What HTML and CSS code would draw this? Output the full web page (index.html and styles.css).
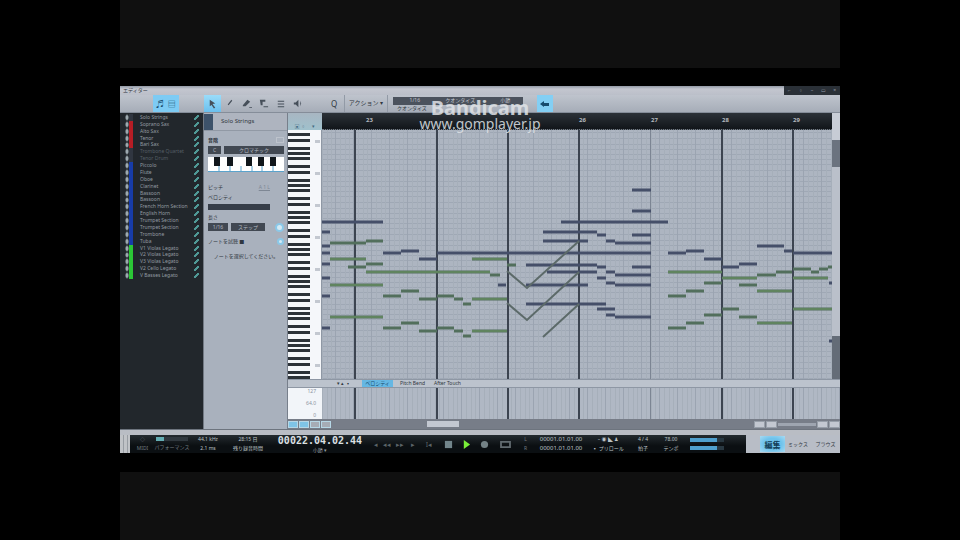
FILE: index.html
```
<!DOCTYPE html>
<html lang="ja">
<head>
<meta charset="utf-8">
<title>Piano roll</title>
<link rel="stylesheet" href="styles.css">
</head>
<body>
<div class="frame">
<main class="app">
  <header class="titlebar"><span class="title">エディター</span><span class="window"><button aria-label="ピン">⌐</button><button aria-label="縮小">▫</button><button aria-label="最小化">–</button><button aria-label="最大化">▭</button><button aria-label="閉じる">×</button></span></header>
  <div class="toolbar">
    <div class="views"><button aria-label="譜面">♬</button><button aria-label="リスト">▤</button></div>
    <div class="tools">
      <button class="on" aria-label="矢印"><svg viewBox="0 0 12 12"><path d="M3 2l6 4-3 .5 3 4-1.500 1L5 7.500 3 9z"/></svg></button>
      <button aria-label="ペイント"><svg viewBox="0 0 12 12"><path d="M4 7l4-5 1 1-4 5z"/></svg></button>
      <button aria-label="消しゴム"><svg viewBox="0 0 12 12"><path d="M2 8l5-6 3 2-5 5H2zM9 10h3v1H9z"/></svg></button>
      <button aria-label="分割"><svg viewBox="0 0 12 12"><path d="M2 2h6v2H5v4H3zM6 9h5v1H6z"/></svg></button>
      <button aria-label="ミュート"><svg viewBox="0 0 12 12"><path d="M3 3h7v1H3zM3 6h7v1H3zM3 9h7v1H3z"/></svg></button>
      <button aria-label="試聴"><svg viewBox="0 0 12 12"><path d="M2 5h2l3-3v8L4 7H2zM9 3l1 3-1 3z"/></svg></button>
    </div>
    <button class="q" aria-label="クオンタイズ">Q</button>
    <button class="action">アクション ▾</button>
    <div class="snap"><div class="snapline"><span>1/16</span><span>クオンタイズ</span><span>小節</span></div><div class="snaplabels"><span>クオンタイズ</span></div></div>
    <button class="follow" aria-label="自動スクロール"><svg viewBox="0 0 10 8"><path fill="#174c6d" d="M0 4l4-3v2h5v3H4v1z"/></svg></button>
  </div>
  <div class="work">
    <aside class="tracks"><ul>
      <li><i></i><span>Solo Strings</span><b></b></li>
      <li class="red"><i></i><span>Soprano Sax</span><b></b></li>
      <li class="red"><i></i><span>Alto Sax</span><b></b></li>
      <li class="red"><i></i><span>Tenor</span><b></b></li>
      <li class="red"><i></i><span>Bari Sax</span><b></b></li>
      <li class="dim"><i></i><span>Trombone Quartet</span><b></b></li>
      <li class="dim"><i></i><span>Tenor Drum</span><b></b></li>
      <li class="blue"><i></i><span>Piccolo</span><b></b></li>
      <li class="blue"><i></i><span>Flute</span><b></b></li>
      <li class="blue"><i></i><span>Oboe</span><b></b></li>
      <li class="blue"><i></i><span>Clarinet</span><b></b></li>
      <li class="blue"><i></i><span>Bassoon</span><b></b></li>
      <li class="blue"><i></i><span>Bassoon</span><b></b></li>
      <li class="blue"><i></i><span>French Horn Section</span><b></b></li>
      <li class="blue"><i></i><span>English Horn</span><b></b></li>
      <li class="blue"><i></i><span>Trumpet Section</span><b></b></li>
      <li class="blue"><i></i><span>Trumpet Section</span><b></b></li>
      <li class="blue"><i></i><span>Trombone</span><b></b></li>
      <li class="blue"><i></i><span>Tuba</span><b></b></li>
      <li class="green"><i></i><span>V1 Violas Legato</span><b></b></li>
      <li class="green"><i></i><span>V2 Violas Legato</span><b></b></li>
      <li class="green"><i></i><span>V3 Violas Legato</span><b></b></li>
      <li class="green"><i></i><span>V2 Cello Legato</span><b></b></li>
      <li class="green"><i></i><span>V Basses Legato</span><b></b></li>
    </ul></aside>
    <aside class="inspector">
      <div class="part"><i></i><span>Solo Strings</span></div>
      <div class="props">
        <div class="row"><strong>音階</strong><i class="box"></i></div>
        <div class="row fields"><button class="dark key">C</button><button class="dark wide">クロマチック</button></div>
        <svg class="octave" viewBox="0 0 76 15" preserveAspectRatio="none"><path fill="#fff" d="M0 0h76v15H0z"/><path stroke="#5ba3cc" d="M0 14.500h76M11 9v6M22 9v6M33 9v6M44 9v6M54 9v6M65 9v6"/><path fill="#10161b" d="M6 0h6v9H6zM19 0h6v9h-6zM38 0h6v9h-6zM50 0h6v9h-6zM62 0h6v9h-6z"/></svg>
        <div class="row gap"><span>ピッチ</span><u>A 1 L</u></div>
        <label class="row" for="vel">ベロシティ</label>
        <input id="vel" type="range" value="100">
        <div class="row"><span>長さ</span></div>
        <div class="row fields"><button class="dark len">1/16</button><button class="dark mode">ステップ</button><i class="glow"></i></div>
        <div class="row notes"><span>ノートを試聴 ■</span><i class="glow small"></i></div>
        <p>ノートを選択してください。</p>
      </div>
    </aside>
    <section class="editor">
      <div class="corner"><span>▣ ▫</span><span>▾</span></div>
      <div class="ruler"><span>23</span><span></span><span></span><span>26</span><span>27</span><span>28</span><span>29</span></div>
      <div class="vscroll"></div>
      <svg class="keys" viewBox="0 0 34 249" preserveAspectRatio="none">
        <defs><pattern id="octaveKeys" width="34" height="32" patternUnits="userSpaceOnUse">
          <path fill="#f5f7fa" d="M0 0h34v32H0z"/><path fill="#2c3238" d="M0 3h22v3H0zM0 9h22v3H0zM0 17h22v3H0zM0 22h22v3H0zM0 27h22v3H0z"/><path fill="#c3c8d0" d="M27 10h5v3h-5z"/></pattern></defs>
        <path fill="url(#octaveKeys)" d="M0 0h34v249H0z"/><path fill="#8f98a5" d="M33 0h1v249h-1z"/>
      </svg>
      <svg class="roll" viewBox="0 0 510 249" preserveAspectRatio="none">
        <defs>
          <pattern id="rows" width="510" height="32" patternUnits="userSpaceOnUse"><path fill="#9fa8b5" d="M0 2h510v1H0zM0 8h510v1H0zM0 14h510v1H0zM0 19h510v1H0zM0 24h510v1H0zM0 29h510v1H0z"/></pattern>
          <pattern id="beats" x="5" width="18" height="249" patternUnits="userSpaceOnUse"><path fill="#9ba4b1" d="M8 0h1v249H8z"/><path fill="#a6afba" d="M0 0h1v249H0zM4 0h1v249H4zM13 0h1v249h-1z"/></pattern>
        </defs>
        <path fill="#adb5c1" d="M0 0h510v249H0z"/><path fill="url(#rows)" d="M0 0h510v249H0z"/><path fill="url(#beats)" d="M0 0h510v249H0z"/>
        <path stroke="#3c4450" stroke-width="2" d="M33 0v249M115 0v249M186 0v249M257 0v249M400 0v249M471 0v249"/>
        <path stroke="#7c8593" d="M328.500 0v249"/>
        <path class="stave" stroke="#526f5c" d="M8 113h36M44 111h17M8 129h36M26 137h18M44 134h17M44 142h124M168 145h10M8 155h53M8 187h53M150 129h35M61 166h18M79 161h18M97 169h18M115 166h17M132 169h9M141 174h8M150 169h35M61 198h18M79 193h18M97 201h18M115 198h17M132 201h9M141 206h8M150 201h35M185 135h9M346 142h54M400 148h35M435 145h19M454 142h16M471 139h18M489 142h8M497 139h9M471 148h35M506 137h4M346 166h18M364 161h18M382 153h18M417 155h18M435 161h35M346 198h18M364 193h18M382 185h18M400 179h17M417 187h18M435 193h35M471 179h39"/>
        <path class="stave core" stroke="#6f9a62" d="M8 129h36M44 142h124M8 155h53M8 187h53M150 129h35M150 169h35M150 201h35M346 142h54M400 148h35M435 161h35M435 193h35M471 148h35M471 179h39"/>
        <path class="stave" stroke="#454f69" d="M0 92h61M0 102h8M0 116h8M0 123h8M0 134h8M0 148h8M0 166h8M0 198h8M61 123h18M79 121h18M97 129h18M115 123h214M310 60h19M310 81h19M239 92h107M221 102h54M275 105h9M310 105h19M221 111h45M284 111h9M293 113h36M204 135h71M275 137h9M310 137h19M225 142h50M284 142h9M293 145h36M275 148h9M284 153h9M293 155h36M176 155h8M204 155h62M204 174h80M275 179h18M284 185h9M293 187h36M346 123h18M364 121h18M382 129h18M400 137h17M417 134h18M435 116h27M462 121h8M471 123h39M507 153h3M507 211h3"/>
        <path fill="none" stroke="#5c6a69" stroke-width="2" d="M185 141l20 17 52-47M185 173l20 17 52-48M221 207l36-33"/>
      </svg>
      <div class="vscroll2"><i></i><i></i></div>
      <div class="lanes"><span>▾ ▴ ▪</span><button class="on">ベロシティ</button><button>Pitch Bend</button><button>After Touch</button></div>
      <div class="scale"><span>127</span><span>64.0</span><span>0</span></div>
      <svg class="lane" viewBox="0 0 518 31" preserveAspectRatio="none"><path fill="#b0b8c4" d="M0 0h518v31H0z"/><path fill="url(#beats)" d="M0 0h518v31H0z"/><path stroke="#3c4450" stroke-width="2" d="M33 0v31M115 0v31M186 0v31M257 0v31M400 0v31M471 0v31"/><path stroke="#7c8593" d="M328.500 0v31"/></svg>
      <div class="hscroll"><span class="chips"><b></b><b></b><i></i><i></i></span><i class="thumb"></i><span class="zoom"><i></i><i></i><em></em><i></i><i></i></span></div>
    </section>
  </div>
  <footer class="transport">
    <div class="grip"></div>
    <div class="deck">
      <div class="stack"><span>◇</span><span>MIDI</span></div>
      <div class="stack"><i class="load"></i><span>パフォーマンス</span></div>
      <div class="stack lit"><span>44.1 kHz</span><span>2.1 ms</span></div>
      <div class="stack lit"><span>28:15 日</span><span>残り録音時間</span></div>
      <div class="clock"><strong>00022.04.02.44</strong><span>小節 ▾</span></div>
      <div class="controls">
        <button aria-label="前へ">◂</button><button aria-label="巻き戻し">◂◂</button><button aria-label="早送り">▸▸</button><button aria-label="次へ">▸</button><button aria-label="先頭へ">I◂</button>
        <button aria-label="停止"><svg viewBox="0 0 10 10"><path fill="#72858b" d="M1 1h8v8H1z"/></svg></button>
        <button aria-label="再生"><svg viewBox="0 0 10 10"><path fill="#79ed38" d="M2 0l7 5-7 5z"/></svg></button>
        <button aria-label="録音"><svg viewBox="0 0 10 10"><circle cx="5" cy="5" r="4" fill="#748286"/></svg></button>
        <button aria-label="ループ"><svg class="loop" viewBox="0 0 14 10"><path fill="none" stroke="#626b70" stroke-width="2" d="M2 2h10v6H2z"/></svg></button>
      </div>
      <div class="stack"><span>L</span><span>R</span></div>
      <div class="stack lit loc"><span>00001.01.01.00</span><span>00001.01.01.00</span></div>
      <div class="stack lit"><span>– ◉ ◣ ♟</span><span>▪ プリロール</span></div>
      <div class="stack lit"><span>4 / 4</span><span>拍子</span></div>
      <div class="stack lit"><span>78.00</span><span>テンポ</span></div>
      <div class="meters"><i></i><i></i></div>
    </div>
    <nav><button class="on">編集</button><button>ミックス</button><button>ブラウズ</button></nav>
  </footer>
  <div class="watermark"><strong>Bandicam</strong><span>www.gomplayer.jp</span></div>
</main>
</div>
</body>
</html>
```
FILE: styles.css
```
* { box-sizing: border-box; }
body { margin: 0; background: #000; font-family: "Noto Sans", "Noto Sans CJK JP", sans-serif; font-size: 5px; line-height: 7px; color: #303740; }
button { margin: 0; padding: 0; border: 0; background: none; font: inherit; color: inherit; display: flex; align-items: center; justify-content: center; white-space: nowrap; }
svg { display: block; }
.frame { width: 75%; min-height: 100vh; margin: 0 auto; display: grid; padding: 86px 0 87px; background: linear-gradient(#101010 68px, #000 68px, #000 calc(100% - 68px), #101010 calc(100% - 68px)); }
.app { position: relative; display: flex; flex-direction: column; min-width: 0; background: #adb3be; overflow: hidden; }
.titlebar { display: flex; justify-content: space-between; height: 9px; background: linear-gradient(#9299a5, #c3c6cf 3px, #bbbfc9); line-height: 9px; padding-left: 3px; }
.window { display: flex; justify-content: space-around; width: 56px; background: #2a3037; color: #989fa8; }
.window button { height: 8px; }
.toolbar { display: flex; align-items: stretch; height: 18px; background: linear-gradient(#bfc4cd, #a6adb8); border-bottom: 1px solid #858d99; }
.views { display: flex; justify-content: space-evenly; width: 26px; margin-left: 33px; background: #7dcbf4; color: #174c6d; font-size: 8px; }
.tools { display: flex; width: 102px; margin-left: 25px; }
.tools button { flex: 1; }
.tools svg { width: 11px; height: 11px; fill: #464f5a; }
.tools .on { background: linear-gradient(#9adcfa, #6bc0ee); }
.q { width: 16px; margin-left: 20px; margin-right: 2px; font-size: 8px; }
.action { width: 44px; font-size: 6px; border: 1px solid #929aa6; border-width: 0 1px; }
.snap { width: 130px; margin: 2px 0 0 5px; font-size: 5px; }
.snapline, .snaplabels { display: flex; height: 8px; padding-left: 4px; }
.snapline { justify-content: space-around; background: #4b525d; color: #c3c8cf; }
.follow { width: 16px; margin-left: 14px; background: #83cff4; }
.follow svg { width: 10px; height: 8px; }
.work { flex: 1; min-height: 0; display: grid; grid-template-columns: 84px 84px minmax(0, 1fr); border-bottom: 1px solid #6d747e; }
.tracks { background: #22272c; border-right: 1px solid #727983; overflow: hidden; }
.tracks ul { display: grid; grid-template-rows: repeat(24, 1fr); height: 165px; margin: 1px 0 0; padding: 0 4px 0 5px; list-style: none; color: #939ba1; }
.tracks li { display: flex; align-items: center; min-height: 0; font-size: 5px; white-space: nowrap; }
.tracks li i { width: 8px; align-self: stretch; border-right: 4px solid #303640; background: radial-gradient(#9da9af 1px, transparent 2px); margin-right: 7px; }
.tracks .red i { border-color: #b61d25; }
.tracks .blue i { border-color: #173ca9; }
.tracks .green i { border-color: #2bc736; }
.tracks .dim { color: #555e65; }
.tracks li span { flex: 1; }
.tracks li b { width: 5px; height: 5px; background: linear-gradient(135deg, transparent 35%, #4f9895 35%, #4f9895 65%, transparent 65%); }
.inspector { background: #a9b1bd; border-right: 1px solid #777f8b; }
.part { display: flex; align-items: center; height: 18px; gap: 8px; background: #aeb4bf; border-bottom: 1px solid #9199a5; font-size: 6px; }
.part i { width: 9px; height: 16px; background: #3d526a; }
.props { padding: 4px 3px 0 4px; display: flex; flex-direction: column; white-space: nowrap; }
.row { display: flex; align-items: center; justify-content: space-between; height: 10px; }
.row u { color: #7e8794; margin-right: 14px; }
.fields { gap: 3px; justify-content: flex-start; }
.dark { height: 8px; background: #414852; color: #b3b9c1; }
.key { width: 13px; }
.wide { flex: 1; }
.box { width: 8px; height: 6px; border: 1px solid #bdc3cc; }
.octave { width: 100%; height: 15px; margin: 2px 0 10px; }
#vel { appearance: none; width: 62px; height: 6px; margin: 2px 0; background: #363d48; }
#vel::-webkit-slider-thumb { appearance: none; width: 1px; height: 6px; background: #363d48; }
.len { width: 20px; }
.mode { width: 34px; }
.glow { width: 9px; height: 9px; border-radius: 5px; background: #d3eaf5; border: 2px solid #8ac8e8; margin-left: auto; }
.small { width: 7px; height: 7px; }
.notes { margin-top: 4px; }
.props p { margin: 7px 0 0; text-align: center; }
.editor { display: grid; grid-template: 17px minmax(0, 1fr) 9px 31px 10px / 34px minmax(0, 1fr) 8px; min-width: 0; background: #adb4c0; }
.corner { display: flex; align-items: flex-end; justify-content: space-evenly; background: linear-gradient(#a8b6c2, #a0c1cc); color: #426b82; }
.ruler { display: grid; grid-template-columns: 71fr 71fr 71fr 72fr 71fr 71fr 39fr; padding-left: 44px; background: linear-gradient(#2c3238, #11151a); color: #b4b9bf; border-bottom: 1px dotted #737b85; }
.ruler span { line-height: 14px; font-size: 6px; font-weight: bold; }
.vscroll { background: #c9ced7; }
.keys, .roll, .lane { width: 100%; height: 100%; }
.stave { fill: none; stroke-width: 3; }
.core { stroke-width: 1; }
.vscroll2 { background: #646c77; display: flex; flex-direction: column; }
.vscroll2 i:first-child { height: 37px; background: linear-gradient(#c7ccd5 10px, #6b737f 10px); }
.vscroll2 i:last-child { height: 169px; background: #bac0ca; }
.lanes { grid-column: 1 / -1; display: flex; align-items: center; gap: 4px; padding-left: 49px; background: #bcc3cd; border: 1px solid #8e97a4; border-width: 1px 0; font-size: 5px; }
.lanes button { height: 7px; width: 31px; }
.lanes span { width: 21px; }
.lanes .on { background: #65b7e3; color: #164d70; }
.scale { display: flex; flex-direction: column; justify-content: space-between; padding-right: 6px; text-align: right; background: #f2f5f9; color: #8b939e; }
.lane { grid-column: 2 / -1; min-height: 0; }
.hscroll { grid-column: 1 / -1; display: flex; align-items: center; background: #777d88; }
.chips { display: flex; gap: 1px; width: 45px; }
.chips b, .chips i { width: 10px; height: 7px; background: #7fc4e6; border: 1px solid #b6d7e6; }
.chips i { background: #a6acb5; }
.thumb { width: 32px; height: 6px; margin-left: 94px; background: #c3c8d1; }
.zoom { display: flex; align-items: center; gap: 1px; width: 86px; margin-left: auto; }
.zoom i { width: 11px; height: 7px; background: #c3c8d1; border: 1px solid #979fa9; }
.zoom em { flex: 1; height: 3px; background: #9ea5b0; }
.transport { display: grid; grid-template-columns: 10px minmax(0, 616fr) minmax(0, 94fr); height: 23px; border-top: 5px solid #b9bdc4; background: #b8bdc6; }
.grip { background: repeating-linear-gradient(90deg, #c0c3c7 0 3px, #989da3 3px 4px); }
.deck { display: grid; grid-template-columns: 25fr 34fr 38fr 42fr 102fr 146fr 17fr 54fr 40fr 30fr 26fr 62fr; background: linear-gradient(#242b2f, #0b0f12 60%); color: #737b80; }
.deck > * { min-width: 0; }
.stack { display: flex; flex-direction: column; align-items: center; justify-content: space-evenly; white-space: nowrap; font-size: 5px; }
.lit { color: #bdc3c6; }
.loc { font-size: 6px; }
.load { width: 32px; height: 4px; background: linear-gradient(90deg, #64aeb4 8px, #30383e 8px); }
.clock { display: flex; flex-direction: column; align-items: center; color: #dce0e3; }
.clock strong { font: bold 10px/12px "DejaVu Sans Mono", monospace; }
.clock span { line-height: 6px; color: #969da1; }
.controls { display: grid; grid-template-columns: 9fr 13fr 13fr 13fr 20fr 18fr 18fr 18fr 24fr; color: #5c6468; font-size: 7px; }
.controls svg { width: 9px; height: 9px; }
.controls .loop { width: 13px; }
.meters { display: flex; flex-direction: column; justify-content: center; gap: 4px; padding: 0 22px 0 6px; }
.meters i { height: 4px; background: linear-gradient(90deg, #4f9fcd 78%, #293841 78%); }
.transport nav { display: grid; grid-template-columns: 25fr 26fr 29fr; align-items: center; padding-left: 14px; }
.transport nav button { height: 16px; font-size: 5px; }
.transport nav .on { background: radial-gradient(#6fc3ec 50%, #a8daf2); color: #123e58; font-weight: bold; font-size: 8px; }
.watermark { position: absolute; top: 12px; left: 0; right: 0; display: flex; flex-direction: column; align-items: center; color: #dfe2e6; opacity: .85; pointer-events: none; }
.watermark strong { font-size: 20px; line-height: 19px; }
.watermark span { font-size: 14px; line-height: 13px; }
```
